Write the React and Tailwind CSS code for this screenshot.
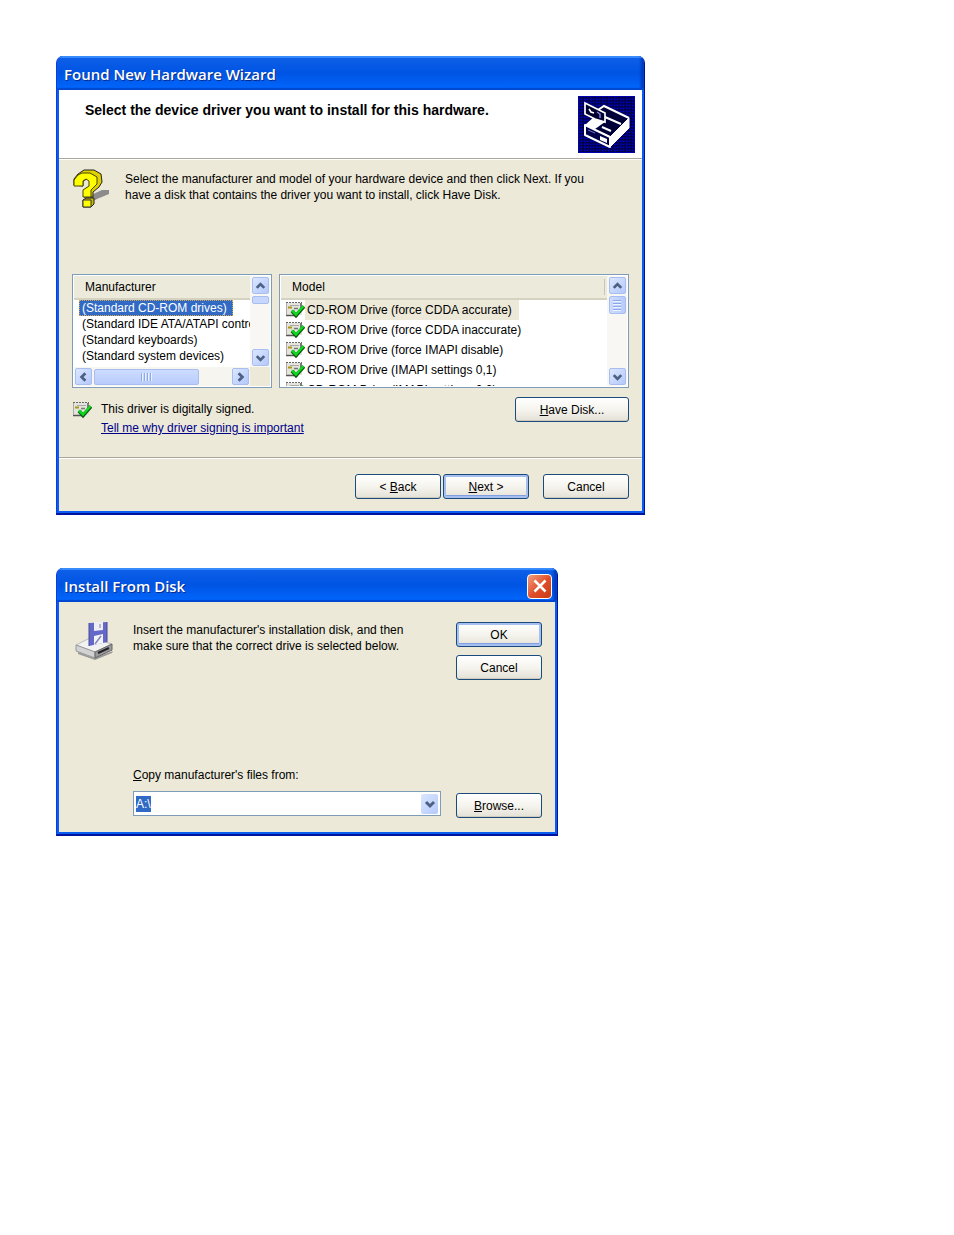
import { useEffect, useRef } from 'react'
import clsx from 'clsx'

const MANUFACTURERS = [
  '(Standard CD-ROM drives)',
  '(Standard IDE ATA/ATAPI controllers)',
  '(Standard keyboards)',
  '(Standard system devices)',
]

const MODELS = [
  'CD-ROM Drive (force CDDA accurate)',
  'CD-ROM Drive (force CDDA inaccurate)',
  'CD-ROM Drive (force IMAPI disable)',
  'CD-ROM Drive (IMAPI settings 0,1)',
  'CD-ROM Drive (IMAPI settings 0,2)',
]

const ARROWS = {
  up: 'M4 10 8 6l4 4',
  down: 'M4 6l4 4 4-4',
  left: 'M10 4 6 8l4 4',
  right: 'M6 4l4 4-4 4',
}

/* ── Icons ── */

function DeviceIcon() {
  return (
    <svg viewBox="0 0 57 57" className="size-[57px] shrink-0">
      <defs>
        <pattern id="mesh" width="3" height="3" patternUnits="userSpaceOnUse">
          <rect width="3" height="3" fill="#00006c" />
          <rect width="1" height="1" fill="#0000e0" />
          <rect x="2" y="1" width="1" height="1" fill="#000018" />
        </pattern>
      </defs>
      <rect width="57" height="57" fill="url(#mesh)" />
      <rect x=".5" y=".5" width="56" height="56" fill="none" stroke="#0000b0" />
      <path d="M26 10 51 22 32 41 7 29Z" fill="#000038" />
      <path d="M20 14 26 10 51 22M27 21 43 28" fill="none" stroke="#fff" strokeWidth="2" />
      <path d="M32 41 51 22V32L32 51Z" fill="#fff" stroke="#fff" />
      <path d="M7 29 32 41V51L7 39Z" fill="#000048" stroke="#fff" strokeWidth="2" strokeLinejoin="round" />
      <path d="M7 29 17 20 27 26 17 33Z" fill="#fff" />
      <path d="M7 7 27 17V26L17 23 7 18Z" fill="#000030" stroke="#fff" strokeWidth="1.7" />
      <path d="M11 13 13 16 16 17" fill="none" stroke="#fff" strokeWidth="1.6" />
      <path d="M19 16 22 18V22" fill="none" stroke="#8888e8" strokeWidth="1.4" />
      <path d="M24 31 33 35" stroke="#fff" strokeWidth="2" />
      <path d="M22 40 29 43V47L22 44Z" fill="#fff" />
      <path d="M10 34 17 37" stroke="#7070d0" />
    </svg>
  )
}

function QuestionIcon() {
  return (
    <svg viewBox="0 0 40 42" className="h-[42px] w-10 shrink-0">
      <path d="M19 27 30 22 37 22 37 26 25 31 19 34Z" fill="#8c8c8c" />
      <path
        d="M2 17V11L6 6 12 2H22L29 6 30 14 27 19 21 24V29H12V22L19 17V12L15 11 11 13V18Z"
        fill="#e0d000"
        stroke="#222"
        strokeLinejoin="round"
      />
      <path
        d="M2 18V12L6 7 10 5H18L25 9V16L19 22V29H11V22L17 18V13L14 11 11 13V18Z"
        fill="#ffff00"
        stroke="#444400"
      />
      <path d="M11 32 14 30H22V36L19 39H11Z" fill="#c8b800" stroke="#222" strokeLinejoin="round" />
      <path d="M11 32H19V39H11Z" fill="#ffff00" stroke="#333" />
    </svg>
  )
}

function SignedIcon() {
  return (
    <svg viewBox="0 0 20 18" className="h-[18px] w-5 shrink-0">
      <path d="M1 2H17V14H1Z" fill="#e4e4dc" />
      <path d="M1 1.500H17" stroke="#666" strokeDasharray="2 1" />
      <path d="M1 14.500H13M16 2V9" stroke="#555" strokeWidth="1.500" />
      <path d="M1.500 2V14M5 4.500H14" stroke="#aaa" />
      <path d="M9 7.500H13M6 10.500H10" stroke="#777" strokeWidth="1.500" />
      <path d="M3 6.500H7" stroke="#a89818" strokeWidth="2" />
      <path d="M7 10 11 14.500 19 5.500" fill="none" stroke="#0a5a10" strokeWidth="3.500" />
      <path d="M7 9.500 11 13.500 18.500 5" fill="none" stroke="#10d820" strokeWidth="2.500" />
    </svg>
  )
}

function FloppyDriveIcon() {
  return (
    <svg viewBox="0 0 40 40" className="size-10 shrink-0">
      <path d="M4 30 20 36 39 29 38 31 21 38 4 32Z" fill="#999" />
      <path d="M2 23 16 16 38 22 21 30Z" fill="#f2f2f2" stroke="#bbb" />
      <path d="M2 23 21 30V36L2 29Z" fill="#d2d2d4" stroke="#999" />
      <path d="M21 30 38 22V28L21 36Z" fill="#9a9a9e" stroke="#666" />
      <path d="M24 31 35 26" stroke="#222" strokeWidth="2" />
      <path d="M15 1 33 0V20L15 24Z" fill="#6468c8" />
      <path d="M15 1V24M33 0V20" stroke="#4a4a98" />
      <path d="M20 0 29 0V8L20 9Z" fill="#eeeef4" />
      <path d="M25 2H27V6H25Z" fill="#b8b8cc" />
      <path d="M20 14 29 12V21L20 23Z" fill="#f4f4fa" />
      <path d="M21 22 27 14" stroke="#8888b8" strokeWidth="1.500" />
    </svg>
  )
}

/* ── Controls ── */

function Arrow({ dir }) {
  return (
    <svg viewBox="0 0 16 16" className="size-4" fill="none" stroke="#4d6185" strokeWidth="3">
      <path d={ARROWS[dir]} />
    </svg>
  )
}

function ScrollButton({ dir }) {
  return (
    <button
      aria-label={`Scroll ${dir}`}
      className="flex size-[17px] shrink-0 items-center justify-center rounded-xs border border-[#a8bdf0]
                 bg-linear-to-br from-[#dce7ff] to-[#b4c9fb]"
    >
      <Arrow dir={dir} />
    </button>
  )
}

function PushButton({ children, primary, className }) {
  return (
    <button
      className={clsx(
        'h-[25px] rounded-[3px] border border-[#1b4a7c] bg-linear-to-b from-white via-[#f5f4ee] to-[#e4e1d6] text-center',
        primary
          ? 'shadow-[inset_0_0_0_2px_#a5bff0,inset_0_-1px_0_2px_#7f9fe0]'
          : 'shadow-[inset_0_-1px_0_#cfcabb]',
        className ?? 'w-[86px]',
      )}
    >
      {children}
    </button>
  )
}

function Window({ title, closable, className, children }) {
  return (
    <section
      className={clsx(
        'w-full overflow-hidden rounded-t-[7px] border-x border-b-2 border-l-[#0a3ce0] border-r-[#00139c] border-b-[#00139c] bg-[#0b5cf0]',
        className,
      )}
    >
      <header
        className="flex h-[34px] items-center justify-between bg-linear-to-b from-[#1060e8] via-[#0054e3] to-[#0068ff]
                   pr-[5px] pl-[7px] pt-[2px] shadow-[inset_0_2px_1px_#3a8dff,inset_0_-2px_1px_#0048d0,inset_-3px_0_3px_#0038b8]"
      >
        <h2 className="font-['Open_Sans',sans-serif] text-[15px] leading-5 font-semibold text-white [text-shadow:1px_1px_#0a2a88]">
          {title}
        </h2>
        {closable && (
          <button
            aria-label="Close"
            className="flex size-[25px] items-center justify-center rounded-[4px] border border-white
                       bg-linear-to-br from-[#f0a080] via-[#e0502c] to-[#c83810]"
          >
            <svg viewBox="0 0 16 16" className="size-4" stroke="#fff" strokeWidth="2.500">
              <path d="M2.500 2.500 13.500 13.500M13.500 2.500 2.500 13.500" />
            </svg>
          </button>
        )}
      </header>
      <div className="mx-[2px] mb-[2px] bg-[#ece9d8]">{children}</div>
    </section>
  )
}

function ListHeader({ children, divided }) {
  return (
    <th scope="col" className="h-6 border-b-2 border-[#d6d2c2] bg-[#ebeadb] pl-[11px] text-left font-normal">
      <span className={clsx('mr-[2px] block', divided && 'border-r border-[#c9c6b4]')}>{children}</span>
    </th>
  )
}

function ManufacturerList() {
  return (
    <div className="flex h-[114px] min-w-0 flex-[199] border border-[#7f9db9] bg-white p-px">
      <div className="flex min-w-0 flex-1 flex-col">
        <div className="min-h-0 flex-1 overflow-hidden">
          <table className="w-full table-fixed border-separate border-spacing-0">
            <thead>
              <tr><ListHeader>Manufacturer</ListHeader></tr>
            </thead>
            <tbody>
              {MANUFACTURERS.map((name, i) => (
                <tr key={name}>
                  <td className="h-4 overflow-hidden pl-[5px] whitespace-nowrap">
                    <span
                      className={clsx(
                        'block w-max pr-[6px] pl-[3px] leading-4',
                        i === 0 && 'bg-[#316ac5] text-white outline-1 -outline-offset-1 outline-dotted outline-[#d8a850]',
                      )}
                    >
                      {name}
                    </span>
                  </td>
                </tr>
              ))}
            </tbody>
          </table>
        </div>
        <div className="flex h-[19px] items-center bg-[#f6f5f0] px-px">
          <ScrollButton dir="left" />
          <div className="flex flex-1">
            <div
              className="ml-[2px] flex h-4 w-[105px] items-center justify-center gap-px rounded-xs border border-[#a8bdf0]
                         bg-linear-to-b from-[#cddcff] to-[#b8ccfb]"
            >
              {[0, 1, 2, 3].map(n => (
                <span key={n} className="h-2 w-[2px] border-l border-[#8ca8e8] bg-[#eef4fe]" />
              ))}
            </div>
          </div>
          <ScrollButton dir="right" />
        </div>
      </div>
      <div className="flex w-5 flex-col items-center bg-[#f8f7f3] pt-px">
        <ScrollButton dir="up" />
        <div className="mt-[2px] h-2 w-[17px] rounded-xs border border-[#a8bdf0] bg-[#c6d6fd]" />
        <div className="flex-1" />
        <ScrollButton dir="down" />
        <div className="mt-px h-[19px] w-full bg-[#ece9d8]" />
      </div>
    </div>
  )
}

function ModelList() {
  return (
    <div className="flex h-[114px] min-w-0 flex-[351] border border-[#7f9db9] bg-white p-px">
      <div className="min-w-0 flex-1 overflow-hidden">
        <table className="w-full table-fixed border-separate border-spacing-0">
          <thead>
            <tr><ListHeader divided>Model</ListHeader></tr>
          </thead>
          <tbody>
            {MODELS.map((name, i) => (
              <tr key={name}>
                <td className="h-5 pl-1 whitespace-nowrap">
                  <div className="flex h-5 items-center">
                    <SignedIcon />
                    <span className={clsx('pr-[7px] pl-[2px] leading-5', i === 0 && 'bg-[#ece9d8]')}>{name}</span>
                  </div>
                </td>
              </tr>
            ))}
          </tbody>
        </table>
      </div>
      <div className="flex w-5 flex-col items-center bg-[#f8f7f3] py-px">
        <ScrollButton dir="up" />
        <div
          className="mt-[2px] flex h-[18px] w-[17px] flex-col items-center justify-center gap-px rounded-xs border
                     border-[#a8bdf0] bg-linear-to-r from-[#cddcff] to-[#b8ccfb]"
        >
          {[0, 1, 2, 3].map(n => (
            <span key={n} className="h-[2px] w-2 border-t border-[#8ca8e8] bg-[#eef4fe]" />
          ))}
        </div>
        <div className="flex-1" />
        <ScrollButton dir="down" />
      </div>
    </div>
  )
}

/* ── Dialogs ── */

function HardwareWizard() {
  return (
    <Window title="Found New Hardware Wizard" className="max-w-[589px]">
      <div className="flex items-start justify-between border-b border-[#aca899] bg-white pt-[6px] pr-[7px] pb-[5px] pl-[26px]">
        <h3 className="pt-1 text-[14px] leading-5 font-bold">Select the device driver you want to install for this hardware.</h3>
        <DeviceIcon />
      </div>

      <div className="border-t border-white px-[13px]">
        <div className="flex items-start pt-2">
          <QuestionIcon />
          <p className="max-w-[490px] pt-[3px] pl-[13px]">
            Select the manufacturer and model of your hardware device and then click Next. If you
            have a disk that contains the driver you want to install, click Have Disk.
          </p>
        </div>

        <div className="mt-16 flex gap-[7px]">
          <ManufacturerList />
          <ModelList />
        </div>

        <div className="flex items-start justify-between pt-[9px]">
          <div className="flex items-start pt-1">
            <SignedIcon />
            <div className="pl-[9px]">
              <p className="leading-4">This driver is digitally signed.</p>
              <a href="#signing" className="block leading-[22px] text-[#00008b] underline">
                Tell me why driver signing is important
              </a>
            </div>
          </div>
          <PushButton className="w-[114px]"><u>H</u>ave Disk...</PushButton>
        </div>
      </div>

      <div className="mt-[18px] flex justify-end border-t border-[#aca899] pt-4 pr-[13px] pb-3 shadow-[inset_0_1px_#fff]">
        <PushButton>&lt; <u>B</u>ack</PushButton>
        <PushButton primary className="ml-[2px] w-[86px]"><u>N</u>ext &gt;</PushButton>
        <PushButton className="ml-[14px] w-[86px]">Cancel</PushButton>
      </div>
    </Window>
  )
}

function InstallFromDisk() {
  const pathRef = useRef(null)

  // The path is preselected so typing replaces it
  useEffect(() => {
    pathRef.current?.focus({ preventScroll: true })
    pathRef.current?.select()
  }, [])

  return (
    <Window title="Install From Disk" closable className="max-w-[502px]">
      <div className="flex items-start pt-5 pr-[13px] pl-[15px]">
        <div className="flex min-w-0 flex-1 items-start">
          <FloppyDriveIcon />
          <p className="max-w-[305px] pl-[19px]">
            Insert the manufacturer's installation disk, and then make sure that the correct drive is selected below.
          </p>
        </div>
        <div className="flex flex-col gap-2">
          <PushButton primary>OK</PushButton>
          <PushButton>Cancel</PushButton>
        </div>
      </div>

      <div className="flex items-end gap-[15px] pt-[87px] pr-[13px] pb-[14px] pl-[74px]">
        <div className="min-w-0 flex-1 pb-[2px]">
          <label htmlFor="path" className="block pb-2"><u>C</u>opy manufacturer's files from:</label>
          <div className="flex h-[25px] items-center border border-[#7f9db9] bg-white pr-[2px]">
            <input
              id="path"
              ref={pathRef}
              defaultValue="A:\"
              className="min-w-0 flex-1 pl-[2px] leading-4 outline-none selection:bg-[#316ac5] selection:text-white"
            />
            <button
              aria-label="Show drives"
              className="flex h-5 w-[17px] items-center justify-center rounded-xs bg-linear-to-br from-[#dce7ff] to-[#b4c9fb]"
            >
              <Arrow dir="down" />
            </button>
          </div>
        </div>
        <PushButton><u>B</u>rowse...</PushButton>
      </div>
    </Window>
  )
}

export default function App() {
  return (
    <main className="flex min-h-screen flex-col gap-[53px] bg-white p-14 font-['Liberation_Sans',Arial,sans-serif] text-[12px] leading-4 text-black">
      <HardwareWizard />
      <InstallFromDisk />
    </main>
  )
}
